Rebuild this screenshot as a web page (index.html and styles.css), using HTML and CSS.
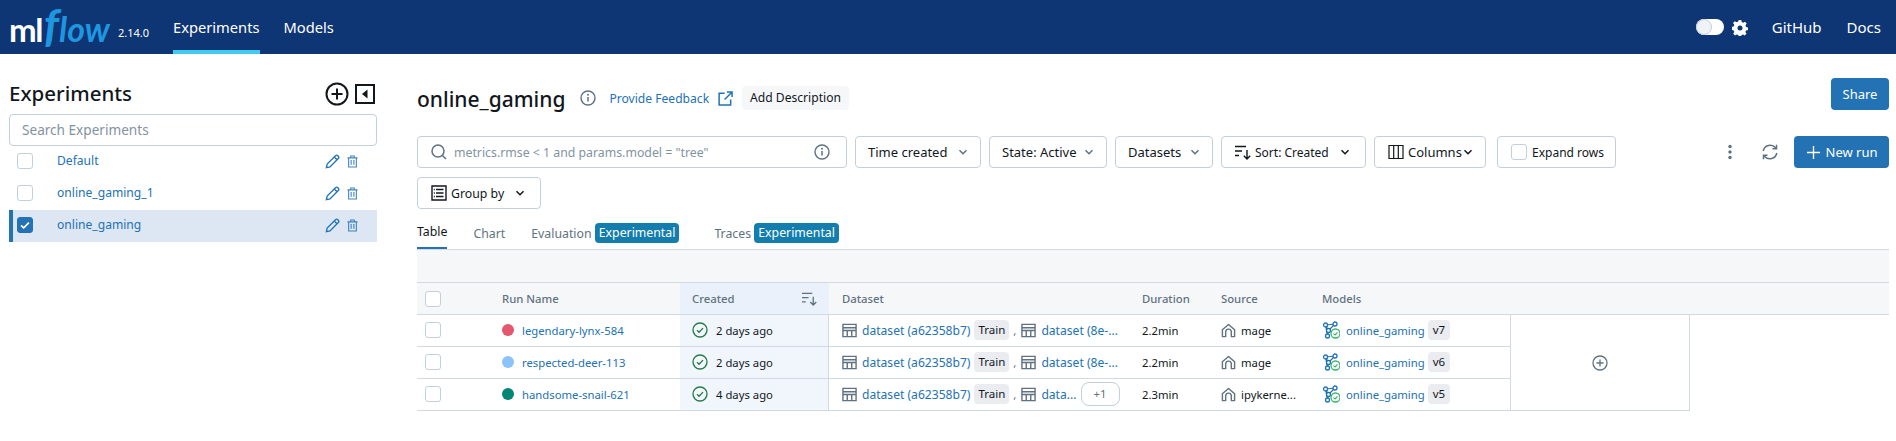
FILE: index.html
```html
<!DOCTYPE html>
<html lang="en">
<head>
    <meta charset="UTF-8">
    <title>MLflow Experiments</title>
    <link rel="stylesheet" href="styles.css">
</head>
<body>
    <svg class="defs" width="0" height="0">
        <symbol id="i-table" viewBox="0 0 16 16"><path d="M1 1.500h14v13H1zM1 5h14M1 8h14M5.600 8v6.500M10.400 8v6.500" fill="none" stroke="currentColor" stroke-width="1.500"/></symbol>
        <symbol id="i-house" viewBox="0 0 16 16"><path d="M1.500 14.500V7.200L8 1.600l6.500 5.600v7.300h-3.500V9.500a3 3 0 0 0-6 0v5z" fill="none" stroke="currentColor" stroke-width="1.500" stroke-linejoin="round"/></symbol>
        <symbol id="i-check" viewBox="0 0 16 16"><circle cx="8" cy="8" r="7" fill="none" stroke="currentColor" stroke-width="1.300"/><path d="M5 8.200l2.100 2.100L11 6.100" fill="none" stroke="currentColor" stroke-width="1.300"/></symbol>
        <symbol id="i-model" viewBox="0 0 18 18"><path d="M3.500 4L13 3M3.500 4l3 5.500M3.500 4L5.500 14.500M13 3L6.500 9.500M6.500 9.500l-1 5M6.500 9.500l5.500 2" fill="none" stroke="#2272b4" stroke-width="1.200"/><circle cx="3.500" cy="4" r="2" fill="#fff" stroke="#2272b4" stroke-width="1.300"/><circle cx="13" cy="3" r="2" fill="#fff" stroke="#2272b4" stroke-width="1.300"/><circle cx="6.500" cy="9.500" r="2" fill="#fff" stroke="#2272b4" stroke-width="1.300"/><circle cx="5.500" cy="15" r="2" fill="#fff" stroke="#2272b4" stroke-width="1.300"/><circle cx="13.500" cy="12.500" r="4.500" fill="#fff" stroke="#3cb371" stroke-width="1.300"/><path d="M11.500 12.600l1.500 1.400 2.600-2.700" fill="none" stroke="#3cb371" stroke-width="1.200"/></symbol>
        <symbol id="i-chevron" viewBox="0 0 12 12"><path d="M2.500 4.200L6 7.700l3.500-3.500" fill="none" stroke="currentColor" stroke-width="1.500"/></symbol>
        <symbol id="i-pencil" viewBox="0 0 16 16"><path d="M1.500 14.500l.8-3.800L11.200 1.800a1.700 1.700 0 0 1 2.400 0l.6.600a1.700 1.700 0 0 1 0 2.400L5.300 13.700zM9.800 3.200l3 3" fill="none" stroke="currentColor" stroke-width="1.400"/></symbol>
        <symbol id="i-trash" viewBox="0 0 12 14"><path d="M.5 3h11M4 3V1h4v2M1.800 3v10h8.400V3M4.500 5.500v5M7.500 5.500v5" fill="none" stroke="currentColor" stroke-width="1.200"/></symbol>
        <symbol id="i-sort" viewBox="0 0 16 16"><path d="M0 2.500h11M0 7h7M0 11.500h4M12 6v9M8.800 11.800l3.200 3.200 3.200-3.200" fill="none" stroke="currentColor" stroke-width="1.400"/></symbol>
        <symbol id="i-info" viewBox="0 0 16 16"><circle cx="8" cy="8" r="7" fill="none" stroke="currentColor" stroke-width="1.400"/><path d="M8 7v4.500" stroke="currentColor" stroke-width="1.500"/><circle cx="8" cy="4.800" r="1" fill="currentColor"/></symbol>
    </svg>

    <header class="topbar">
        <a class="logo"><span class="logo-ml">ml</span><span class="logo-flow"><span class="logo-f">f</span>low</span></a>
        <span class="version">2.14.0</span>
        <nav class="topnav">
            <a class="active">Experiments</a>
            <a>Models</a>
        </nav>
        <div class="topbar-right">
            <span class="toggle"><span class="toggle-knob"></span></span>
            <svg class="gear" viewBox="0 0 16 16"><path d="M6.700.5h2.600l.4 2 1.500.7 1.800-1 1.700 1.900-1.200 1.700.5 1.600 2 .5v2.600l-2 .5-.6 1.500 1.100 1.700-1.800 1.800-1.700-1.100-1.500.6-.5 2H6.700l-.4-2-1.600-.6-1.700 1.100-1.800-1.800 1.100-1.700-.6-1.500-2-.5V7.400l2-.5.6-1.600L1.000 3.600l1.800-1.900 1.800 1 1.600-.6z" fill="#fff"/><circle cx="8" cy="8.500" r="2.500" fill="#0e3574"/></svg>
            <a class="toplink github">GitHub</a>
            <a class="toplink">Docs</a>
        </div>
    </header>

    <div class="layout">
        <aside class="sidebar">
            <div class="sidebar-head">
                <h2>Experiments</h2>
                <svg class="head-plus" viewBox="0 0 24 24"><circle cx="12" cy="12" r="10.500" fill="none" stroke="#11171c" stroke-width="2"/><path d="M12 6.500v11M6.500 12h11" stroke="#11171c" stroke-width="2"/></svg>
                <svg class="head-collapse" viewBox="0 0 20 20"><rect x="1" y="1" width="18" height="18" fill="none" stroke="#11171c" stroke-width="2"/><path d="M12.500 5.500v9L7 10z" fill="#11171c"/></svg>
            </div>
            <div class="side-search">Search Experiments</div>
            <div class="exp-row">
                <span class="box"></span>
                <a>Default</a>
                <svg class="pencil"><use href="#i-pencil"/></svg>
                <svg class="trash"><use href="#i-trash"/></svg>
            </div>
            <div class="exp-row">
                <span class="box"></span>
                <a>online_gaming_1</a>
                <svg class="pencil"><use href="#i-pencil"/></svg>
                <svg class="trash"><use href="#i-trash"/></svg>
            </div>
            <div class="exp-row selected">
                <span class="box checked"><svg viewBox="0 0 16 16"><path d="M3.500 8.300l3 3 6-6" fill="none" stroke="#fff" stroke-width="2"/></svg></span>
                <a>online_gaming</a>
                <svg class="pencil"><use href="#i-pencil"/></svg>
                <svg class="trash"><use href="#i-trash"/></svg>
            </div>
        </aside>

        <main class="main">
            <div class="title-row">
                <h1>online_gaming</h1>
                <svg class="title-info"><use href="#i-info"/></svg>
                <a class="feedback">Provide Feedback</a>
                <svg class="ext" viewBox="0 0 16 16"><path d="M7 2.500H1.200v12.300h12.300V9M9.500 1h5.500v5.500M15 1L7 9" fill="none" stroke="#2272b4" stroke-width="1.600"/></svg>
                <span class="add-desc">Add Description</span>
                <button class="btn-primary share">Share</button>
            </div>

            <div class="controls">
                <div class="filters">
                    <div class="run-search">
                        <svg class="search-icon" viewBox="0 0 16 16"><circle cx="7" cy="7" r="6" fill="none" stroke="#5f7281" stroke-width="1.500"/><path d="M11.200 11.200L15 15" stroke="#5f7281" stroke-width="1.500"/></svg>
                        <span class="placeholder">metrics.rmse &lt; 1 and params.model = "tree"</span>
                        <svg class="search-info"><use href="#i-info"/></svg>
                    </div>
                    <button class="btn w-time">Time created<svg class="chev"><use href="#i-chevron"/></svg></button>
                    <button class="btn w-state">State: Active<svg class="chev"><use href="#i-chevron"/></svg></button>
                    <button class="btn w-data">Datasets<svg class="chev"><use href="#i-chevron"/></svg></button>
                    <button class="btn w-sort"><svg class="btn-icon"><use href="#i-sort"/></svg>Sort: Created<svg class="chev dark"><use href="#i-chevron"/></svg></button>
                    <button class="btn w-cols"><svg class="btn-icon" viewBox="0 0 16 16"><path d="M1 1.500h14v13H1zM5.700 1.500v13M10.300 1.500v13" fill="none" stroke="#11171c" stroke-width="1.200"/></svg>Columns<svg class="chev"><use href="#i-chevron"/></svg></button>
                    <button class="btn w-expand"><span class="box small"></span>Expand rows</button>
                    <button class="btn w-group"><svg class="btn-icon" viewBox="0 0 16 16"><path d="M1 1h14v14H1zM5 4.500h7.500M5 8h7.500M5 11.500h7.500M2.800 4.500h1M2.800 8h1M2.800 11.500h1" fill="none" stroke="#11171c" stroke-width="1.400"/></svg>Group by<svg class="chev dark"><use href="#i-chevron"/></svg></button>
                </div>
                <div class="actions">
                    <svg class="dots" viewBox="0 0 4 16"><circle cx="2" cy="2.500" r="1.700"/><circle cx="2" cy="8" r="1.700"/><circle cx="2" cy="13.500" r="1.700"/></svg>
                    <svg class="refresh" viewBox="0 0 16 16"><path d="M1.200 7A7 7 0 0 1 13.500 3.800M14.800 9A7 7 0 0 1 2.500 12.200M14.500 .8v4h-4M1.500 15.200v-4h4" fill="none" stroke="#5f7281" stroke-width="1.500"/></svg>
                    <button class="btn-primary new-run"><svg viewBox="0 0 16 16"><path d="M8 1v14M1 8h14" stroke="#fff" stroke-width="1.500"/></svg>New run</button>
                </div>
            </div>

            <div class="tabs">
                <a class="tab active">Table</a>
                <a class="tab">Chart</a>
                <a class="tab">Evaluation <span class="badge">Experimental</span></a>
                <a class="tab">Traces <span class="badge">Experimental</span></a>
            </div>

            <div class="band"></div>

            <div class="runs">
                <div class="th"><span class="box"></span></div>
                <div class="th">Run Name</div>
                <div class="th th-created">Created <svg class="sort-small"><use href="#i-sort"/></svg></div>
                <div class="th th-data">Dataset</div>
                <div class="th">Duration</div>
                <div class="th">Source</div>
                <div class="th th-models">Models</div>
                <div class="th"></div>
                <div class="th"></div>

                <div class="td"><span class="box"></span></div>
                <div class="td"><span class="dot dot-red"></span><a>legendary-lynx-584</a></div>
                <div class="td td-created"><svg class="ok"><use href="#i-check"/></svg>2 days ago</div>
                <div class="td td-data"><svg class="tbl"><use href="#i-table"/></svg><a>dataset (a62358b7)</a><span class="tag">Train</span><span class="comma">,</span><svg class="tbl"><use href="#i-table"/></svg><a>dataset (8e-...</a></div>
                <div class="td">2.2min</div>
                <div class="td"><svg class="home"><use href="#i-house"/></svg>mage</div>
                <div class="td td-models"><svg class="model"><use href="#i-model"/></svg><a>online_gaming</a><span class="tag ver">v7</span></div>
                <div class="add-col"><svg viewBox="0 0 16 16"><circle cx="8" cy="8" r="7" fill="none" stroke="#5f7281" stroke-width="1.300"/><path d="M8 4.500v7M4.500 8h7" stroke="#5f7281" stroke-width="1.300"/></svg></div>
                <div class="filler"></div>

                <div class="td"><span class="box"></span></div>
                <div class="td"><span class="dot dot-blue"></span><a>respected-deer-113</a></div>
                <div class="td td-created"><svg class="ok"><use href="#i-check"/></svg>2 days ago</div>
                <div class="td td-data"><svg class="tbl"><use href="#i-table"/></svg><a>dataset (a62358b7)</a><span class="tag">Train</span><span class="comma">,</span><svg class="tbl"><use href="#i-table"/></svg><a>dataset (8e-...</a></div>
                <div class="td">2.2min</div>
                <div class="td"><svg class="home"><use href="#i-house"/></svg>mage</div>
                <div class="td td-models"><svg class="model"><use href="#i-model"/></svg><a>online_gaming</a><span class="tag ver">v6</span></div>

                <div class="td"><span class="box"></span></div>
                <div class="td"><span class="dot dot-green"></span><a>handsome-snail-621</a></div>
                <div class="td td-created"><svg class="ok"><use href="#i-check"/></svg>4 days ago</div>
                <div class="td td-data"><svg class="tbl"><use href="#i-table"/></svg><a>dataset (a62358b7)</a><span class="tag">Train</span><span class="comma">,</span><svg class="tbl"><use href="#i-table"/></svg><a>data...</a><span class="more">+1</span></div>
                <div class="td">2.3min</div>
                <div class="td"><svg class="home"><use href="#i-house"/></svg>ipykerne...</div>
                <div class="td td-models"><svg class="model"><use href="#i-model"/></svg><a>online_gaming</a><span class="tag ver">v5</span></div>
            </div>
        </main>
    </div>
</body>
</html>
```

FILE: styles.css
```css
* {
    box-sizing: border-box;
}
body {
    margin: 0;
    font-family: "Noto Sans", "Open Sans", Arial, sans-serif;
    font-size: 12.1px;
    color: #11171c;
    background: white;
    overflow: hidden;
}
a {
    color: #2272b4;
}
.defs {
    position: absolute;
}

/* top bar */
.topbar {
    display: flex;
    align-items: center;
    height: 54px;
    padding-left: 9px;
    background: #0e3574;
    color: white;
}
.logo {
    display: flex;
    align-items: baseline;
    width: 109px;
    height: 54px;
    line-height: 50px;
}
.logo-ml {
    color: white;
    font-family: "Lato", sans-serif;
    font-size: 33px;
    font-weight: 700;
    letter-spacing: -1.500px;
}
.logo-flow {
    color: #1e96e0;
    font-family: "Lato", sans-serif;
    font-size: 34px;
    font-weight: 700;
    font-style: italic;
    margin-left: 2px;
}
.logo-f {
    font-size: 46px;
}
.version {
    width: 55px;
    padding-top: 10px;
    font-size: 11px;
}
.topnav {
    display: flex;
    gap: 24px;
    height: 54px;
}
.topnav a {
    display: flex;
    align-items: center;
    padding: 4px 0 1px;
    color: white;
    font-size: 14.700px;
    border-bottom: 4px solid transparent;
}
.topnav a.active {
    border-bottom-color: #43c9ed;
}
.topbar-right {
    display: flex;
    align-items: center;
    margin-left: auto;
    padding-right: 15px;
}
.toggle {
    display: block;
    width: 28px;
    height: 16px;
    border-radius: 8px;
    background: white;
    margin-right: 8px;
}
.toggle-knob {
    display: block;
    width: 16px;
    height: 16px;
    border-radius: 50%;
    background: #f0f2f5;
    border: 1px solid #c4cfd9;
}
.gear {
    width: 16px;
    height: 17px;
    margin-right: 24px;
}
.toplink {
    color: white;
    font-size: 15px;
}
.github {
    margin-right: 25px;
}

/* layout */
.layout {
    display: flex;
}
.sidebar {
    flex: 0 0 377px;
    padding-left: 9px;
}
.sidebar-head {
    display: flex;
    align-items: center;
    height: 60px;
    padding-top: 18px;
}
.sidebar-head h2 {
    margin: 0;
    flex: 1;
    font-size: 20.500px;
    font-weight: 500;
}
.head-plus {
    width: 24px;
    height: 24px;
    margin: 1px 6px 0 0;
}
.head-collapse {
    width: 20px;
    height: 20px;
    margin: 1px 2px 0 0;
}
.side-search {
    height: 32px;
    line-height: 30px;
    padding-left: 12px;
    border: 1px solid #c3cfd9;
    border-radius: 4px;
    color: #82939f;
    font-size: 13.600px;
}
.exp-row {
    display: flex;
    align-items: center;
    height: 32px;
    padding-left: 8px;
    padding-bottom: 2px;
}
.exp-row a {
    flex: 1;
    margin: 0 0 1px 24px;
}
.exp-row.selected {
    background: #dce7f3;
    border-left: 4px solid #2272b4;
    padding-left: 4px;
}
.box {
    display: block;
    flex: none;
    width: 16px;
    height: 16px;
    border: 1px solid #c3cfd9;
    border-radius: 3px;
    background: white;
}
.box.checked {
    background: #2272b4;
    border-color: #2272b4;
}
.box.checked svg {
    display: block;
    width: 14px;
    height: 14px;
}
.box.small {
    margin-right: 5px;
}
.pencil {
    width: 15px;
    height: 15px;
    margin-right: 7px;
    color: #2272b4;
}
.trash {
    width: 11px;
    height: 13px;
    margin-right: 19px;
    color: #2272b4;
    opacity: .85;
}

/* main */
.main {
    flex: 1;
    min-width: 0;
    padding: 24px 7px 0 40px;
}
.title-row {
    display: flex;
    align-items: center;
    height: 32px;
}
.title-row h1 {
    margin: 10px 15px 0 0;
    font-size: 21px;
    font-weight: 500;
}
.title-info {
    width: 16px;
    height: 16px;
    margin: 8px 13px 0 0;
    color: #5f7281;
}
.feedback {
    margin: 8px 9px 0 0;
}
.ext {
    width: 15px;
    height: 15px;
    margin: 8px 9px 0 0;
}
.add-desc {
    display: block;
    padding: 0 8px;
    height: 24px;
    line-height: 24px;
    margin-top: 8px;
    background: #f6f7f9;
    border-radius: 4px;
}
.btn-primary {
    display: flex;
    align-items: center;
    justify-content: center;
    height: 32px;
    border: none;
    border-radius: 4px;
    background: #2272b4;
    color: white;
    font-family: inherit;
    font-size: 13px;
}
.share {
    width: 58px;
    margin-left: auto;
}
.controls {
    display: flex;
    margin-top: 26px;
}
.filters {
    display: flex;
    flex-wrap: wrap;
    gap: 9px 8px;
    width: 1240px;
}
.run-search {
    display: flex;
    align-items: center;
    width: 430px;
    height: 32px;
    padding: 0 16px 0 13px;
    border: 1px solid #c3cfd9;
    border-radius: 4px;
}
.search-icon {
    width: 16px;
    height: 16px;
    margin-right: 7px;
}
.placeholder {
    flex: 1;
    color: #82939f;
    font-size: 12.300px;
}
.search-info {
    width: 16px;
    height: 16px;
    color: #5f7281;
}
.btn {
    display: flex;
    align-items: center;
    height: 32px;
    padding: 0 11px 0 12px;
    border: 1px solid #c3cfd9;
    border-radius: 4px;
    background: white;
    color: #11171c;
    font-family: inherit;
    font-size: 13px;
    white-space: nowrap;
}
.w-time { width: 126px; }
.w-state { width: 118px; }
.w-data { width: 98px; }
.w-sort { width: 145px; padding-left: 13px; font-size: 12px; }
.w-cols { width: 112px; padding-left: 13px; }
.w-expand { width: 119px; margin-left: 3px; padding-left: 13px; font-size: 12px; }
.w-group { width: 124px; margin-right: 200px; padding-left: 13px; font-size: 12.300px; }
.btn-icon {
    flex: none;
    width: 16px;
    height: 16px;
    margin-right: 4px;
}
.chev {
    flex: none;
    width: 12px;
    height: 12px;
    margin-left: auto;
    color: #5f7281;
}
.w-cols .chev {
    color: #11171c;
}
.chev.dark {
    margin-right: 3px;
    color: #11171c;
}
.actions {
    display: flex;
    align-items: flex-start;
    margin-left: auto;
}
.dots {
    width: 4px;
    height: 16px;
    margin: 8px 30px 0 0;
    fill: #5f7281;
}
.refresh {
    width: 16px;
    height: 16px;
    margin: 8px 16px 0 0;
}
.new-run {
    width: 95px;
}
.new-run svg {
    width: 15px;
    height: 15px;
    margin-right: 5px;
}

/* tabs */
.tabs {
    display: flex;
    height: 41px;
    border-bottom: 1px solid #d1d9e1;
}
.tab {
    display: flex;
    align-items: center;
    height: 40px;
    padding-top: 8px;
    color: #5f7281;
    margin-right: 26px;
    font-size: 12.300px;
    white-space: pre;
}
.tab:nth-child(3) {
    margin-right: 35px;
}
.tab.active {
    color: #11171c;
    border-bottom: 2px solid #2272b4;
    padding-top: 6px;
}
.badge {
    display: block;
    height: 20px;
    line-height: 20px;
    padding: 0 4px;
    border-radius: 4px;
    background: #137dae;
    color: white;
}
.band {
    height: 33px;
    background: #f6f7f9;
    border-bottom: 1px solid #d1d9e1;
}

/* runs table */
.runs {
    display: grid;
    grid-template-columns: 73px 190px 149px 301px 79px 101px 200px 180px 1fr;
    grid-auto-rows: 32px;
}
.th {
    display: flex;
    align-items: center;
    padding: 0 12px;
    background: #f6f7f9;
    border-bottom: 1px solid #d1d9e1;
    color: #5f7281;
    font-weight: 500;
    font-size: 11.300px;
    white-space: nowrap;
}
.th:nth-child(1) {
    padding-left: 8px;
}
.th-created {
    justify-content: space-between;
    background: #eaf1fa;
}
.sort-small {
    width: 15px;
    height: 15px;
    color: #5f7281;
}
.th-data, .td-data {
    padding-left: 13px;
}
.td {
    display: flex;
    align-items: center;
    padding-top: 0;
    padding-right: 12px;
    padding-bottom: 1px;
    border-bottom: 1px solid #d1d9e1;
    font-size: 11.300px;
    white-space: nowrap;
    overflow: hidden;
}
.td:not(.td-data) {
    padding-left: 12px;
}
.td:has(> .box) {
    padding-left: 8px;
}
.td-created {
    background: #f0f6fc;
    border-right: 1px solid #d1d9e1;
}
.td-data a {
    font-size: 12.100px;
}
.dot {
    width: 12px;
    height: 12px;
    border-radius: 50%;
    margin-right: 8px;
}
.dot-red { background: #e5566f; }
.dot-blue { background: #8bc4fa; }
.dot-green { background: #058574; }
.ok {
    flex: none;
    width: 16px;
    height: 16px;
    margin-right: 8px;
    color: #277c43;
}
.tbl {
    flex: none;
    width: 15px;
    height: 15px;
    margin-right: 5px;
    color: #5f7281;
}
.tag {
    margin-left: 4px;
    padding: 0 4px;
    height: 20px;
    line-height: 20px;
    border-radius: 4px;
    background: #eaecef;
    font-size: 11.500px;
}
.comma {
    margin: 0 5px 0 4px;
    color: #5f7281;
}
.more {
    flex: none;
    margin-left: 4px;
    width: 39px;
    height: 24px;
    line-height: 22px;
    text-align: center;
    border: 1px solid #c3cfd9;
    border-radius: 8px;
    color: #5f7281;
}
.home {
    flex: none;
    width: 15px;
    height: 15px;
    margin-right: 5px;
    color: #5f7281;
}
.model {
    flex: none;
    width: 18px;
    height: 18px;
    margin-right: 6px;
}
.ver {
    margin-left: 3px;
    padding: 0 5px;
}
.add-col {
    display: flex;
    align-items: center;
    justify-content: center;
    grid-row: span 3;
    border-left: 1px solid #d1d9e1;
    border-right: 1px solid #d1d9e1;
    border-bottom: 1px solid #d1d9e1;
}
.add-col svg {
    width: 16px;
    height: 16px;
}
.filler {
    grid-row: span 3;
}
```
